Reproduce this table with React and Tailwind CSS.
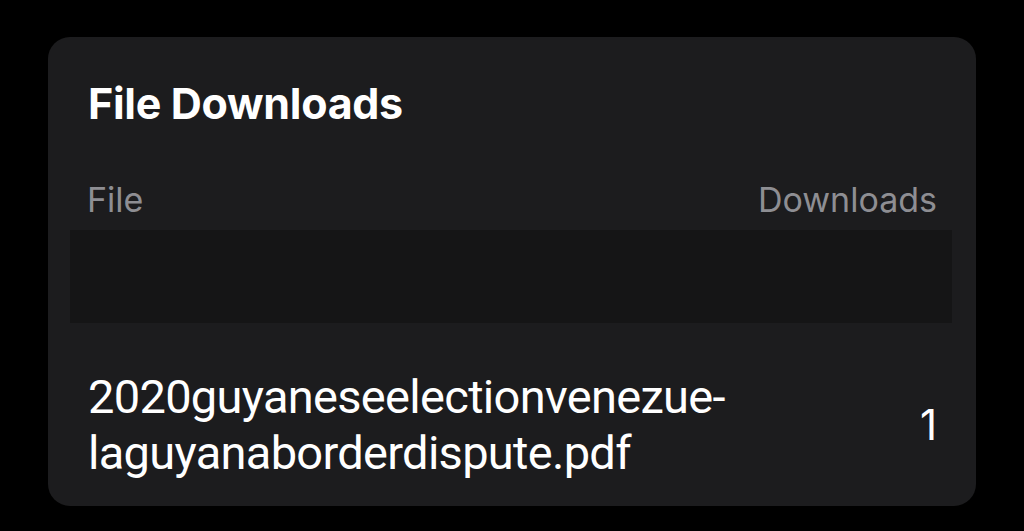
import React from 'react';

const files = [
    { name: ['2020guyaneseelectionvenezue-', 'laguyanaborderdispute.pdf'], downloads: 1 }
];

export default function App() {
    return (
        <div className="min-h-[531px] bg-black pt-[37px] px-[48px] pb-[25px]" style={{ fontFamily: 'Inter, "Noto Sans", sans-serif' }}>
            <div className="bg-[#1c1c1e] rounded-[22px] pt-[41px] pb-[25px]">
                <h2 className="px-[40px] text-[43px] leading-[50px] font-bold text-white tracking-[-0.3px]">File Downloads</h2>

                <div className="mt-[52px] px-[39px] flex justify-between text-[34px] leading-[40px] text-[#8e8e93]">
                    <span>File</span>
                    <span>Downloads</span>
                </div>

                <div className="mt-[10px] ml-[22px] mr-[24px] h-[93px] bg-[#151516]" />

                {files.map((f, i) => (
                    <div key={i} className="mt-[46px] pl-[40px] pr-[39px] flex justify-between items-center text-white">
                        <span className="text-[47px] leading-[56px] tracking-[-0.7px]" style={{ fontFamily: 'Roboto, "Noto Sans", sans-serif' }}>
                            {f.name[0]}<br />{f.name[1]}
                        </span>
                        <span className="text-[42px] leading-[56px]">{f.downloads}</span>
                    </div>
                ))}
            </div>
        </div>
    );
}
